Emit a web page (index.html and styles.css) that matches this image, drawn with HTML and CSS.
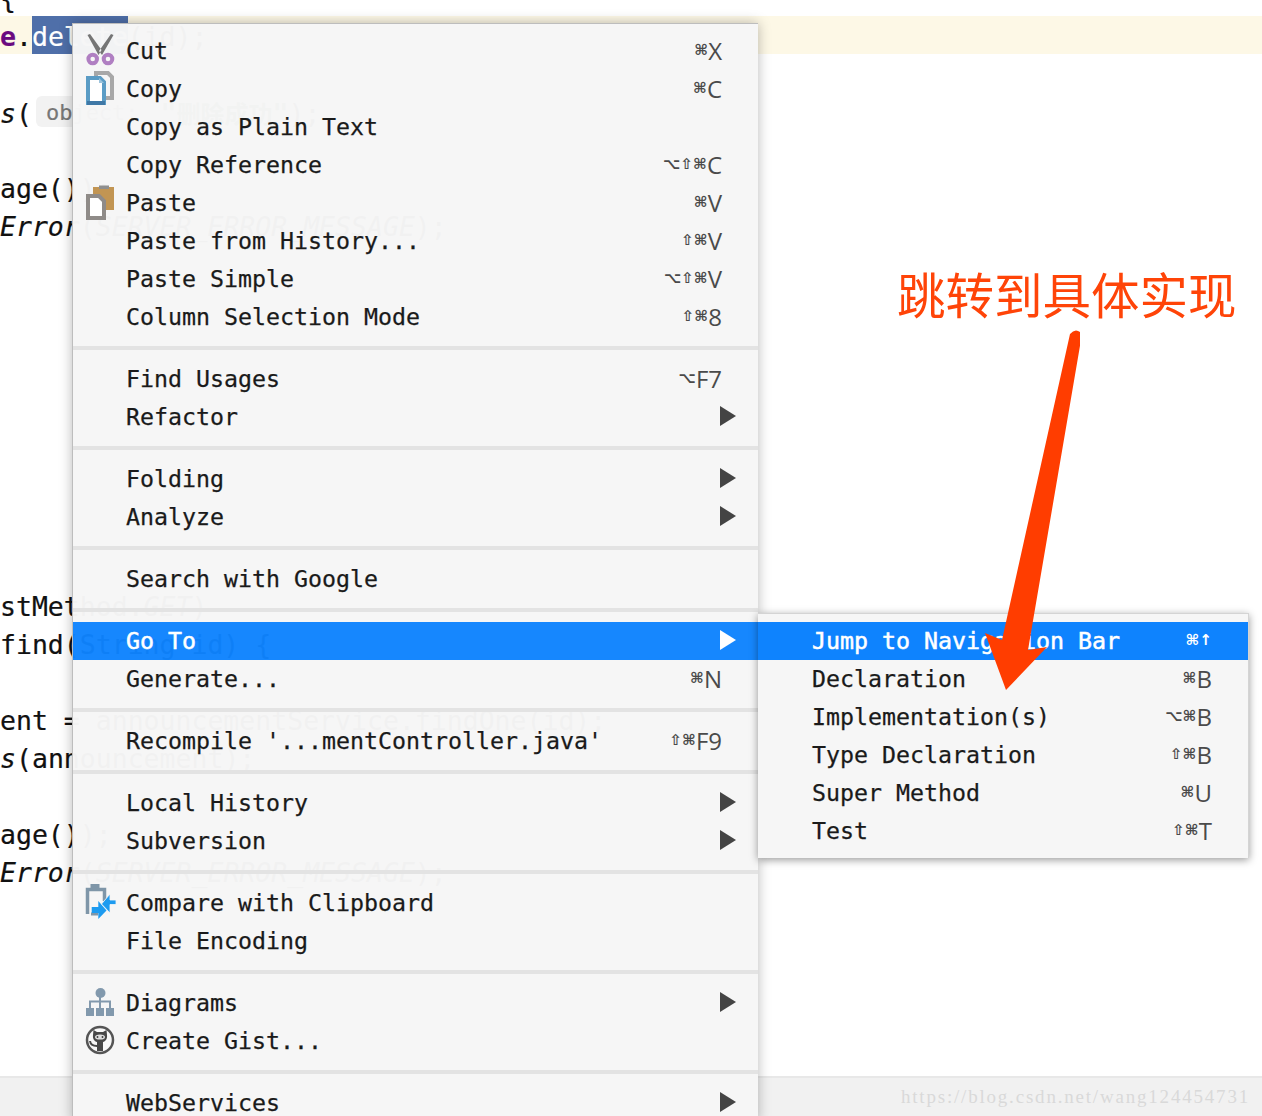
FILE: index.html
```html
<!DOCTYPE html>
<html lang="en">
<head>
<meta charset="utf-8">
<title>Context menu</title>
<link rel="stylesheet" href="styles.css">
</head>
<body>
<div class="page">
  <main class="editor">
    <div class="line">{</div>
    <div class="line current"><b class="field">e</b>.<span class="sel">delete</span>(id);</div>
    <div class="line"></div>
    <div class="line"><i>s</i>( <span class="hint">object:</span><span class="str">"<span class="cjk">删除成功</span>"</span>);</div>
    <div class="line"></div>
    <div class="line">age());</div>
    <div class="line"><i>Error</i>(<i>SERVER_ERROR_MESSAGE</i>);</div>
    <div class="line"></div><div class="line"></div><div class="line"></div>
    <div class="line"></div><div class="line"></div><div class="line"></div>
    <div class="line"></div><div class="line"></div><div class="line"></div>
    <div class="line">stMethod.<i>GET</i>)</div>
    <div class="line">find(String id) {</div>
    <div class="line"></div>
    <div class="line">ent = announcementService.findOne(id);</div>
    <div class="line"><i>s</i>(announcement);</div>
    <div class="line"></div>
    <div class="line">age());</div>
    <div class="line"><i>Error</i>(<i>SERVER_ERROR_MESSAGE</i>);</div>
  </main>
  <footer class="status"><span class="mark">https://blog.csdn.net/wang124454731</span></footer>

  <nav class="menu main-menu">
    <div class="row"><span class="ico"><svg width="32" height="32" viewBox="0 0 32 32"><path d="M3.500 0 6 -1 17.500 15 14.500 20Z M29.500 0 27 -1 15 16 18 20Z" fill="#757575"/><circle cx="8.700" cy="24" r="4.300" fill="none" stroke="#b07fc2" stroke-width="4"/><circle cx="24" cy="24" r="4.300" fill="none" stroke="#b07fc2" stroke-width="4"/></svg></span><span class="label">Cut</span><span class="keys"><span class="s">⌘</span>X</span></div>
    <div class="row"><span class="ico"><svg width="32" height="32" viewBox="0 0 32 32"><path d="M12 0H24L28 4V25H12Z" fill="#f6f6f6" stroke="#a8a8a8" stroke-width="4"/><path d="M4 5H16L20 9V30H4Z" fill="#fff" stroke="#5b9cc5" stroke-width="4"/><path d="M3 28H21V32H3Z" fill="#3f78a6"/><path d="M15 5V10H20Z" fill="#9cc3dc"/></svg></span><span class="label">Copy</span><span class="keys"><span class="s">⌘</span>C</span></div>
    <div class="row"><span class="ico"></span><span class="label">Copy as Plain Text</span></div>
    <div class="row"><span class="ico"></span><span class="label">Copy Reference</span><span class="keys"><span class="s">⌥⇧⌘</span>C</span></div>
    <div class="row"><span class="ico"><svg width="32" height="32" viewBox="0 0 32 32"><path d="M9 0H30V23H9Z" fill="#c29553"/><path d="M15 -1.500H25V2H15Z" fill="#8f8f8f"/><path d="M4 9H15L20 14V31H4Z" fill="#fff" stroke="#8f8b88" stroke-width="4"/></svg></span><span class="label">Paste</span><span class="keys"><span class="s">⌘</span>V</span></div>
    <div class="row"><span class="ico"></span><span class="label">Paste from History...</span><span class="keys"><span class="s">⇧⌘</span>V</span></div>
    <div class="row"><span class="ico"></span><span class="label">Paste Simple</span><span class="keys"><span class="s">⌥⇧⌘</span>V</span></div>
    <div class="row"><span class="ico"></span><span class="label">Column Selection Mode</span><span class="keys"><span class="s">⇧⌘</span>8</span></div>
    <div class="sep"></div>
    <div class="row"><span class="ico"></span><span class="label">Find Usages</span><span class="keys"><span class="s">⌥</span>F7</span></div>
    <div class="row"><span class="ico"></span><span class="label">Refactor</span><span class="tri"></span></div>
    <div class="sep"></div>
    <div class="row"><span class="ico"></span><span class="label">Folding</span><span class="tri"></span></div>
    <div class="row"><span class="ico"></span><span class="label">Analyze</span><span class="tri"></span></div>
    <div class="sep"></div>
    <div class="row"><span class="ico"></span><span class="label">Search with Google</span></div>
    <div class="sep"></div>
    <div class="row hl"><span class="ico"></span><span class="label">Go To</span><span class="tri"></span></div>
    <div class="row"><span class="ico"></span><span class="label">Generate...</span><span class="keys"><span class="s">⌘</span>N</span></div>
    <div class="sep"></div>
    <div class="row"><span class="ico"></span><span class="label">Recompile '...mentController.java'</span><span class="keys"><span class="s">⇧⌘</span>F9</span></div>
    <div class="sep"></div>
    <div class="row"><span class="ico"></span><span class="label">Local History</span><span class="tri"></span></div>
    <div class="row"><span class="ico"></span><span class="label">Subversion</span><span class="tri"></span></div>
    <div class="sep"></div>
    <div class="row"><span class="ico"><svg width="32" height="32" viewBox="0 0 32 32"><path d="M3.500 27V2.500H20.500V14" fill="none" stroke="#7f96a8" stroke-width="3.500"/><path d="M7 27H14" stroke="#7f96a8" stroke-width="3"/><path d="M6.500 -3H15.500V3H6.500Z" fill="#7f96a8"/><path d="M22.500 23.500 14.300 14V20H7.700V26H14.300V32Z" fill="#1d9bf0"/><path d="M17.500 17 26 7V13H32V17.500H26V26Z" fill="#1d9bf0" stroke="#f6f6f6" stroke-width=".8"/></svg></span><span class="label">Compare with Clipboard</span></div>
    <div class="row"><span class="ico"></span><span class="label">File Encoding</span></div>
    <div class="sep"></div>
    <div class="row"><span class="ico"><svg width="32" height="32" viewBox="0 0 32 32"><circle cx="16.500" cy="6" r="5" fill="#8299ad"/><path d="M16 10V21M6 21V14.500H26V21" fill="none" stroke="#8299ad" stroke-width="2"/><path d="M2 21H10V29H2ZM12 21H20V29H12ZM22 21H30V29H22Z" fill="#8299ad"/></svg></span><span class="label">Diagrams</span><span class="tri"></span></div>
    <div class="row"><span class="ico"><svg width="32" height="32" viewBox="0 0 32 32"><circle cx="16" cy="15" r="13" fill="#f8f8f8" stroke="#555" stroke-width="2.500"/><path d="M9.500 5 13 7H19L22.500 5 23 10C23.500 14 21.500 16.500 19 17V26H13V17C10.500 16.500 8.500 14 9 10Z" fill="#484848"/><ellipse cx="16" cy="12" rx="5" ry="2.600" fill="#ddd"/><path d="M13.500 11V13M18.500 11V13" stroke="#484848" stroke-width="1.500"/><path d="M6 16C6.500 20 9 21 13 21" fill="none" stroke="#484848" stroke-width="2"/></svg></span><span class="label">Create Gist...</span></div>
    <div class="sep"></div>
    <div class="row"><span class="ico"></span><span class="label">WebServices</span><span class="tri"></span></div>
  </nav>

  <nav class="menu sub-menu">
    <div class="row hl"><span class="label">Jump to Navigation Bar</span><span class="keys arrow-keys"><span class="s">⌘↑</span></span></div>
    <div class="row"><span class="label">Declaration</span><span class="keys"><span class="s">⌘</span>B</span></div>
    <div class="row"><span class="label">Implementation(s)</span><span class="keys"><span class="s">⌥⌘</span>B</span></div>
    <div class="row"><span class="label">Type Declaration</span><span class="keys"><span class="s">⇧⌘</span>B</span></div>
    <div class="row"><span class="label">Super Method</span><span class="keys"><span class="s">⌘</span>U</span></div>
    <div class="row"><span class="label">Test</span><span class="keys"><span class="s">⇧⌘</span>T</span></div>
  </nav>

  <div class="note" lang="zh">跳转到具体实现</div>
  <svg class="pointer" width="100" height="370" viewBox="980 325 100 370"><path d="M1070 334Q1076 327 1082 334L1028 650 1047 647 1006 690 985 633 1002 640Z" fill="#ff3d00"/></svg>
</div>
</body>
</html>
```
FILE: styles.css
```css
* { box-sizing: border-box; }

html, body { margin: 0; padding: 0; }

body { background: #fff; }

.page {
  position: relative;
  display: flex;
  flex-direction: column;
  width: 1262px;
  height: 1116px;
  overflow: hidden;
  font-family: "DejaVu Sans Mono", monospace;
}

.editor {
  flex: 1;
  margin-top: -22px;
  font-size: 26.5px;
  color: #111;
  -webkit-text-stroke: .2px currentColor;
}

.line {
  height: 38px;
  line-height: 42px;
  white-space: pre;
}

.current { background: #fdf8e6; }

.field { color: #6a0a80; }

.sel {
  display: inline-block;
  height: 38px;
  background: #4f6fa9;
  color: #fff;
}

.hint {
  display: inline-block;
  height: 31px;
  margin-left: -12px;
  margin-right: 14px;
  padding: 0 8px 0 10px;
  border-radius: 6px;
  background: #f2f2f2;
  color: #777;
  font-size: 22px;
  line-height: 34px;
  vertical-align: 3px;
}

.str { color: #3c5a3c; font-weight: bold; }

.cjk { font-family: "Noto Sans CJK SC", sans-serif; font-size: 24px; }

.status {
  display: flex;
  justify-content: flex-end;
  align-items: center;
  height: 40px;
  padding-right: 12px;
  border-top: 2px solid #e8e8e8;
  background: #f1f1f1;
}

.mark {
  color: #d9d9d9;
  font-family: "Liberation Serif", serif;
  font-size: 19px;
  letter-spacing: 1.800px;
}

.menu {
  --panel: rgba(246, 246, 246, .98);
  position: absolute;
  display: flex;
  flex-direction: column;
  font-size: 23.250px;
  color: #1a1a1a;
  box-shadow: 0 0 12px rgba(0, 0, 0, .28);
}

.menu::before,
.sub-menu::after {
  content: "";
  display: block;
  height: 8px;
  background: var(--panel);
}

.main-menu {
  left: 72px;
  top: 23px;
  width: 686px;
  border-left: 1px solid #bdbdbd;
  border-top: 1px solid #bdbdbd;
}

.sub-menu {
  --panel: #f6f6f6;
  left: 758px;
  top: 613px;
  width: 491px;
  border: 1px solid #d4d4d4;
  border-left: 0;
  border-bottom: 0;
  box-shadow: 0 2px 8px rgba(0, 0, 0, .4);
}

.row {
  display: flex;
  align-items: center;
  flex: none;
  height: 38px;
  padding-right: 36px;
  padding-bottom: 2px;
  background: var(--panel);
  white-space: pre;
}

.main-menu .row { padding-left: 11px; padding-right: 36px; }

.sub-menu .row { padding-left: 54px; }

.hl { background: rgba(14, 131, 254, .97); color: #fff; }

.sub-menu .hl { background: #0e83fe; }

.ico {
  flex: none;
  display: flex;
  width: 42px;
  height: 32px;
  margin-top: 2px;
}

.ico svg { overflow: visible; }

.label { flex: 1; -webkit-text-stroke: .25px currentColor; }

.hl .label { -webkit-text-stroke: .5px currentColor; }

.keys {
  display: flex;
  align-items: center;
  color: #4a4a4a;
  font-family: "Open Sans", sans-serif;
  font-size: 24px;
}

.s {
  font-family: "DejaVu Sans", sans-serif;
  font-size: 15px;
  font-weight: bold;
}

.hl .keys { color: #fff; font-weight: bold; }

.tri {
  flex: none;
  width: 0;
  height: 0;
  margin-right: -14px;
  border-left: 16px solid #444;
  border-top: 10px solid transparent;
  border-bottom: 10px solid transparent;
}

.hl .tri { border-left-color: #fff; }

.sep {
  flex: none;
  height: 24px;
  background: linear-gradient(#e3e3e3, #e3e3e3) center / 100% 4px no-repeat, var(--panel);
}

.note {
  position: absolute;
  left: 897px;
  top: 262px;
  color: #ff4408;
  font-family: "Noto Sans CJK SC", sans-serif;
  font-size: 48.500px;
  line-height: 62px;
  white-space: nowrap;
}

.pointer {
  position: absolute;
  left: 980px;
  top: 325px;
}
```
